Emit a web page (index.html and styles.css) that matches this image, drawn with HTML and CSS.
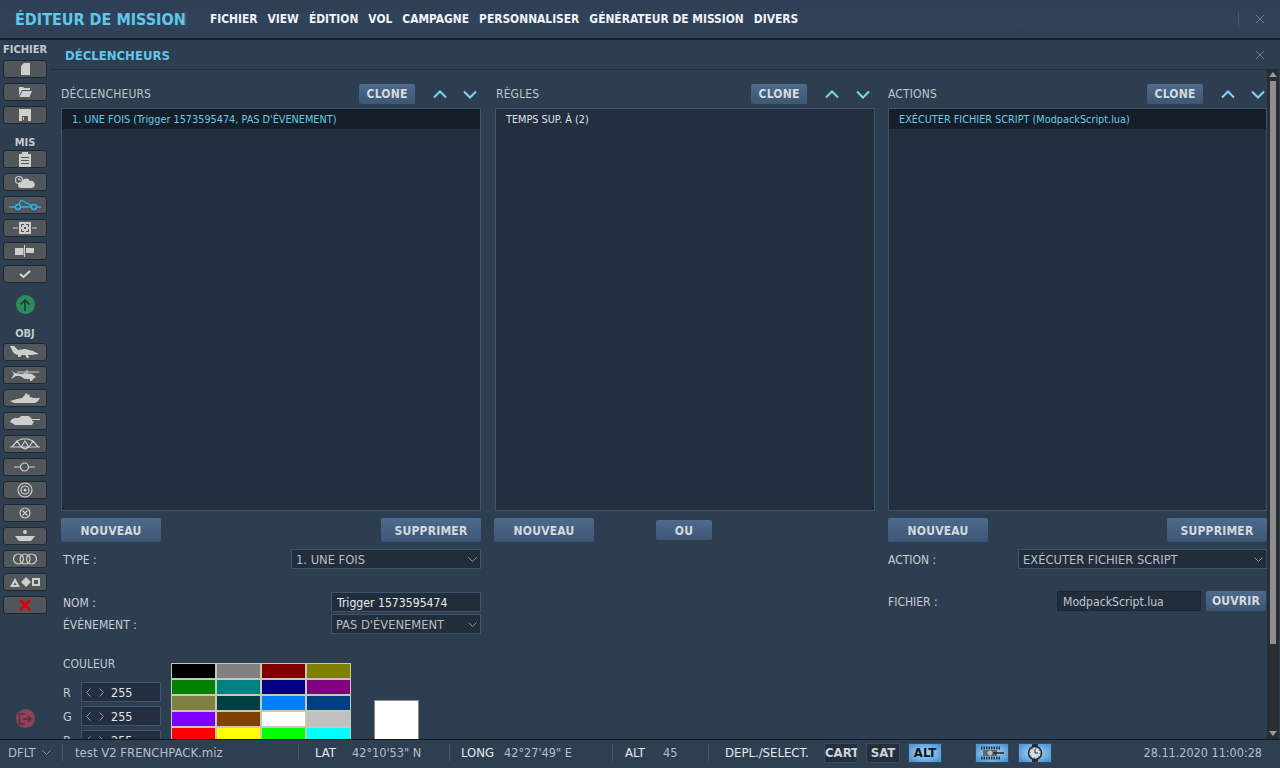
FILE: index.html
```html
<!DOCTYPE html>
<html lang="fr">
<head>
<meta charset="utf-8">
<title>Éditeur de mission</title>
<link rel="stylesheet" href="styles.css">
</head>
<body>
<div class="app">
  <header class="topbar">
    <div class="title">ÉDITEUR DE MISSION</div>
    <nav class="menu">
      <span>FICHIER</span><span>VIEW</span><span>ÉDITION</span><span>VOL</span><span>CAMPAGNE</span><span>PERSONNALISER</span><span>GÉNÉRATEUR DE MISSION</span><span>DIVERS</span>
    </nav>
    <div class="top-close"><svg width="10" height="10" viewBox="0 0 10 10"><path d="M1 1l8 8M9 1l-8 8" class="x"/></svg></div>
  </header>
  <div class="middle">
    <aside class="sidebar">
      <div class="side-label">FICHIER</div>
      <div class="tool"><svg width="14" height="14" viewBox="0 0 14 14"><path class="f" d="M6 1h6v12H3V4z"/></svg></div>
      <div class="tool"><svg width="14" height="12" viewBox="0 0 14 12"><path class="f" d="M1 1h4l1 1h6v2H4L1 10z M4.500 5H14l-2.500 6H1.500z"/></svg></div>
      <div class="tool"><svg width="14" height="14" viewBox="0 0 14 14"><path class="f" fill-rule="evenodd" d="M1 1h12v12H1z M4 8v5h6V8z M5 9h1v3H5z"/></svg></div>
      <div class="side-label mis">MIS</div>
      <div class="tool"><svg width="12" height="15" viewBox="0 0 12 15"><path class="f" fill-rule="evenodd" d="M0 2h3V0h6v2h3v13H0z M2 5v1h8V5z M2 8v1h8V8z M2 11v1h8v-1z"/></svg></div>
      <div class="tool"><svg width="22" height="14" viewBox="0 0 22 14"><circle cx="5" cy="5" r="3.500" class="s"/><path class="s" d="M5 3v2h2"/><path class="f" d="M7 13a3 3 0 0 1 0-6a5 5 0 0 1 9-1a3.500 3.500 0 0 1 2 7z"/></svg></div>
      <div class="tool active"><svg width="32" height="14" viewBox="0 0 32 14"><g class="b"><path d="M0 9h6M12 9h10M28 9h4M12 2l11 6M12 2l-2 5"/><circle cx="9" cy="9" r="2.500"/><circle cx="25" cy="9" r="2.500"/></g></svg></div>
      <div class="tool"><svg width="24" height="14" viewBox="0 0 24 14"><path class="s" d="M0 7h5M19 7h5"/><path class="f" fill-rule="evenodd" d="M6 1h12v12H6z M8 3v3h1V4h2V3z M13 3v1h2v2h1V3z M11 6v2h2V6z M8 8v3h3v-1H9V8z M15 8v2h-2v1h3V8z"/></svg></div>
      <div class="tool"><svg width="20" height="12" viewBox="0 0 20 12"><path class="f" d="M0 3h8.500v7H0zM11 3h8v5h-8zM9 0h1v12H9z"/></svg></div>
      <div class="tool"><svg width="12" height="10" viewBox="0 0 12 10"><path class="chk" d="M1 5l3.500 3L11 2"/></svg></div>
      <div class="round green"><svg width="12" height="14" viewBox="0 0 12 14"><path class="dk" d="M6 13V2M1.500 6.500L6 2l4.500 4.500"/></svg></div>
      <div class="side-label obj">OBJ</div>
      <div class="tool"><svg width="30" height="12" viewBox="0 0 30 12"><path class="f" d="M0 0h4l4 4 7-1 8 2 6 3-8 1-3 0 1 3h-2l-2-3-3 0-2 2H8l0-2-3-1L3 6z"/></svg></div>
      <div class="tool"><svg width="30" height="12" viewBox="0 0 30 12"><path class="s thin" d="M7 3h22M17 1v3"/><path class="f" d="M1 1l4 3 7 1 3-1 7 1 4 3-3 2-1 2h-2l0-2-5 0-5-3-4 0-5 3 3-5z"/></svg></div>
      <div class="tool"><svg width="30" height="10" viewBox="0 0 30 10"><path class="f" d="M0 8l7-2 5-1 2-2 2-3 2 2 1-1 1 3 4 1 6 0-2 3-3 2H4z"/></svg></div>
      <div class="tool"><svg width="30" height="10" viewBox="0 0 30 10"><path class="f" d="M2 3l3-1h4l2-2h8l3 3h8v1h-8l0 1 2 0-2 4H5L2 7 0 6z"/></svg></div>
      <div class="tool"><svg width="30" height="12" viewBox="0 0 30 12"><path class="s" d="M0 9h30M2 9l5-6 4 6 4-6 4 6 4-6 5 6M7 3l5-2h6l5 2M11 9l4 2 4-2"/></svg></div>
      <div class="tool"><svg width="22" height="10" viewBox="0 0 22 10"><path class="s" d="M0 5h6M15 5h6"/><circle class="s" cx="10.500" cy="5" r="4"/></svg></div>
      <div class="tool"><svg width="16" height="16" viewBox="0 0 16 16"><circle class="s" cx="8" cy="8" r="7"/><circle class="s" cx="8" cy="8" r="4"/><circle class="f" cx="8" cy="8" r="1.500"/></svg></div>
      <div class="tool"><svg width="12" height="12" viewBox="0 0 12 12"><circle class="s" cx="6" cy="6" r="5"/><path class="s" d="M3.500 3.500l5 5M8.500 3.500l-5 5"/></svg></div>
      <div class="tool"><svg width="22" height="14" viewBox="0 0 22 14"><path class="f" d="M9 3a2 2 0 1 1 4 0a2 2 0 1 1-4 0zM1 7h20l-4 5H5z"/></svg></div>
      <div class="tool"><svg width="26" height="12" viewBox="0 0 26 12"><g class="s"><circle cx="6.500" cy="6" r="5"/><circle cx="13" cy="6" r="5"/><circle cx="19.500" cy="6" r="5"/></g></svg></div>
      <div class="tool"><svg width="30" height="12" viewBox="0 0 30 12"><path class="f" fill-rule="evenodd" d="M0 11L5 2l5 9z M3.500 9h3L5 6.500z M16 1l5 5-5 5-5-5z M22 2h8v8h-8z M24 4v4h4V4z"/></svg></div>
      <div class="tool"><svg width="14" height="12" viewBox="0 0 14 12"><path class="red" d="M2 1l10 10M12 1L2 11"/></svg></div>
      <div class="round exit"><svg width="14" height="12" viewBox="0 0 14 12"><path class="dk2" d="M7 1H1.500v10H7M5 6h8M10 3l3 3-3 3"/></svg></div>
    </aside>
    <main class="panel">
      <div class="panel-head">
        <h1>DÉCLENCHEURS</h1>
        <svg width="10" height="10" viewBox="0 0 10 10"><path d="M1 1l8 8M9 1l-8 8" class="x"/></svg>
      </div>
      <div class="scroll-area">
        <div class="columns">
          <section class="col col1">
            <div class="col-head"><span class="col-title">DÉCLENCHEURS</span><button class="btn clone">CLONE</button><svg class="ar" width="14" height="9" viewBox="0 0 14 9"><path d="M1 7.500l6-6 6 6"/></svg><svg class="ar" width="14" height="9" viewBox="0 0 14 9"><path d="M1 1.500l6 6 6-6"/></svg></div>
            <div class="list"><div class="row sel">1. UNE FOIS (Trigger 1573595474, PAS D'ÉVENEMENT)</div></div>
            <div class="btn-row"><button class="btn big">NOUVEAU</button><button class="btn big">SUPPRIMER</button></div>
            <div class="form-row type"><span class="lbl">TYPE :</span><div class="select w190"><span>1. UNE FOIS</span><svg width="9" height="5" viewBox="0 0 9 5"><path class="chev" d="M.5.500l4 4 4-4"/></svg></div></div>
            <div class="form-row nom"><span class="lbl">NOM :</span><div class="input w150">Trigger 1573595474</div></div>
            <div class="form-row evt"><span class="lbl">ÉVÈNEMENT :</span><div class="select w150"><span>PAS D'ÉVENEMENT</span><svg width="9" height="5" viewBox="0 0 9 5"><path class="chev" d="M.5.500l4 4 4-4"/></svg></div></div>
            <div class="color">
              <div class="rgb">
                <div class="color-title">COULEUR</div>
                <div class="rgb-row"><span>R</span><div class="spin"><svg width="18" height="9" viewBox="0 0 18 9"><path class="chev" d="M4.500.500L.5 4.500l4 4M13.500.500l4 4-4 4"/></svg><b>255</b></div></div>
                <div class="rgb-row"><span>G</span><div class="spin"><svg width="18" height="9" viewBox="0 0 18 9"><path class="chev" d="M4.500.500L.5 4.500l4 4M13.500.500l4 4-4 4"/></svg><b>255</b></div></div>
                <div class="rgb-row"><span>B</span><div class="spin"><svg width="18" height="9" viewBox="0 0 18 9"><path class="chev" d="M4.500.500L.5 4.500l4 4M13.500.500l4 4-4 4"/></svg><b>255</b></div></div>
              </div>
              <div class="palette">
                <i class="c1"></i><i class="c2"></i><i class="c3"></i><i class="c4"></i>
                <i class="c5"></i><i class="c6"></i><i class="c7"></i><i class="c8"></i>
                <i class="c9"></i><i class="c10"></i><i class="c11"></i><i class="c12"></i>
                <i class="c13"></i><i class="c14"></i><i class="c15"></i><i class="c16"></i>
                <i class="c17"></i><i class="c18"></i><i class="c19"></i><i class="c20"></i>
              </div>
              <div class="swatch"></div>
            </div>
          </section>
          <section class="col col2">
            <div class="col-head"><span class="col-title">RÈGLES</span><button class="btn clone">CLONE</button><svg class="ar" width="14" height="9" viewBox="0 0 14 9"><path d="M1 7.500l6-6 6 6"/></svg><svg class="ar" width="14" height="9" viewBox="0 0 14 9"><path d="M1 1.500l6 6 6-6"/></svg></div>
            <div class="list"><div class="row plain">TEMPS SUP. À (2)</div></div>
            <div class="btn-row left"><button class="btn big">NOUVEAU</button><button class="btn ou">OU</button></div>
          </section>
          <section class="col col3">
            <div class="col-head"><span class="col-title">ACTIONS</span><button class="btn clone">CLONE</button><svg class="ar" width="14" height="9" viewBox="0 0 14 9"><path d="M1 7.500l6-6 6 6"/></svg><svg class="ar" width="14" height="9" viewBox="0 0 14 9"><path d="M1 1.500l6 6 6-6"/></svg></div>
            <div class="list"><div class="row sel">EXÉCUTER FICHIER SCRIPT (ModpackScript.lua)</div></div>
            <div class="btn-row"><button class="btn big">NOUVEAU</button><button class="btn big">SUPPRIMER</button></div>
            <div class="form-row type act"><span class="lbl">ACTION :</span><div class="select w249"><span>EXÉCUTER FICHIER SCRIPT</span><svg width="9" height="5" viewBox="0 0 9 5"><path class="chev" d="M.5.500l4 4 4-4"/></svg></div></div>
            <div class="form-row nom file"><span class="lbl">FICHIER :</span><div class="file-ctl"><div class="input w144 dim">ModpackScript.lua</div><button class="btn open">OUVRIR</button></div></div>
          </section>
        </div>
        <div class="scrollbar">
          <svg width="8" height="5" viewBox="0 0 8 5"><path d="M4 0l4 5H0z" class="sb-a"/></svg>
          <div class="thumb"></div>
          <svg class="down" width="8" height="5" viewBox="0 0 8 5"><path d="M4 5l4-5H0z" class="sb-a"/></svg>
        </div>
      </div>
    </main>
  </div>
  <footer class="status">
    <div class="cell dflt">DFLT <svg width="9" height="5" viewBox="0 0 9 5"><path class="chev" d="M.5.500l4 4 4-4"/></svg></div>
    <div class="cell file-name">test V2 FRENCHPACK.miz</div>
    <div class="cell lat"><span class="k">LAT</span><span class="v">42°10'53" N</span></div>
    <div class="cell long"><span class="k">LONG</span><span class="v">42°27'49" E</span></div>
    <div class="cell alt"><span class="k">ALT</span><span class="v">45</span></div>
    <div class="cell depl"><span class="k">DEPL./SELECT.</span></div>
    <div class="tbtn carte"><span>CARTE</span></div>
    <div class="tbtn sat">SAT</div>
    <div class="tbtn on alt-b">ALT</div>
    <div class="tbtn on ic first"><svg width="24" height="14" viewBox="0 0 24 14"><path class="ic-t" d="M1 2h19M1 12h19"/><path class="ic-g" d="M3 4h14v6H3z"/><circle cx="10" cy="7" r="2.500" class="ic-l"/><path class="ic-k" d="M13 7h11"/></svg></div>
    <div class="tbtn on ic"><svg width="18" height="18" viewBox="0 0 18 18"><path class="ic-d" d="M6 0h6v3H6zM6 15h6v3H6z"/><circle cx="9" cy="9" r="6.500" class="ic-w"/><circle cx="9" cy="9" r="5" class="ic-dots"/><path class="ic-k2" d="M9 5v4h3"/></svg></div>
    <div class="date">28.11.2020 11:00:28</div>
  </footer>
</div>
</body>
</html>
```
FILE: styles.css
```css
*{box-sizing:border-box}
html,body{margin:0;padding:0;width:1280px;height:768px;overflow:hidden}
body{font-family:"DejaVu Sans Condensed","DejaVu Sans",sans-serif;background:#2d3e51;color:#c9ced3}
.app{width:1280px;height:768px;display:flex;flex-direction:column;overflow:hidden}
.topbar{height:40px;flex:none;display:flex;align-items:center;background:linear-gradient(#2e3f53,#30435a 60%,#2e3f52);border-bottom:2px solid #161e29}
.title{width:186px;height:17px;line-height:17px;padding-left:15px;font-size:16px;font-weight:bold;color:#5fc8ea;white-space:nowrap;border-right:1px solid #44576b}
.menu{display:flex;gap:10px;margin-left:24px;font-size:11.880px;font-weight:bold;color:#f1f3f5}
.top-close{margin-left:auto;width:42px;height:16px;border-left:1px solid #44576b;display:flex;align-items:center;justify-content:center;padding-left:1px}
.x{stroke:#6c8097;stroke-width:1;fill:none}
.middle{flex:1;min-height:0;display:flex}
.sidebar{width:50px;flex:none;display:flex;flex-direction:column;align-items:center;padding-top:4px;gap:5px}
.side-label{font-size:11px;font-weight:bold;color:#c3c9cf;height:11px;line-height:11px}
.side-label.mis{margin-top:8px;margin-bottom:-3px}
.side-label.obj{margin-top:9px;margin-bottom:-1px}
.tool{width:44px;height:18px;flex:none;background:#50565a;border:1px solid #20272f;border-radius:3px;display:flex;align-items:center;justify-content:center}
.f{fill:#cdcfcb}
.s{stroke:#cdcfcb;stroke-width:1.200;fill:none}
.thin{stroke-width:1}
.b{stroke:#2cb4e4;stroke-width:1.400;fill:none}
.chk{stroke:#d8dad6;stroke-width:2;fill:none}
.red{stroke:#e00008;stroke-width:3;fill:none}
.dk{stroke:#17392e;stroke-width:1.500;fill:none}
.dk2{stroke:#5a2b3a;stroke-width:1.500;fill:none}
.round{width:19px;height:19px;border-radius:50%;display:flex;align-items:center;justify-content:center;flex:none}
.green{background:#2e8c5c;margin-top:7px}
.exit{background:#8a4655;margin-top:auto;margin-bottom:11px}
.panel{flex:1;min-width:0;display:flex;flex-direction:column}
.panel-head{height:30px;flex:none;border-bottom:1px solid #1f2c3a;display:flex;align-items:center;justify-content:space-between;padding:1px 15px 0}
.panel-head h1{margin:0;font-size:13px;font-weight:bold;color:#5fc8ea}
.scroll-area{flex:1;min-height:0;display:flex;overflow:hidden}
.columns{width:1217px;flex:none;display:flex;padding-left:11px;overflow:hidden}
.col{flex:none;display:flex;flex-direction:column}
.col1{width:420px;margin-right:14px}
.col2{width:380px;margin-right:13px}
.col3{width:379px}
.col-head{height:24px;margin-top:12px;flex:none;display:flex;align-items:center;padding-right:4px}
.col-title{font-size:12px;color:#bfc5cb;margin-right:auto;letter-spacing:.15px}
.col2 .col-title{padding-left:1px}
.col-head .ar{margin-left:16px;flex:none}
.col-head .clone+.ar{margin-left:18px}
.col2 .col-head{padding-right:5px}
.col2 .col-head .ar:last-child{margin-left:17px}
.col3 .col-head{padding-right:2px}
.ar path{stroke:#7fd6f0;stroke-width:2;fill:none}
.btn{font-family:inherit;border:0;font-weight:bold;color:#d5d9dc;background:linear-gradient(#4d6b8e,#3d5674);border-radius:2px;padding:0;letter-spacing:.2px}
.clone{width:56px;height:20px;font-size:12px}
.list{height:403px;margin-top:2px;flex:none;background:#232f3e;border:1px solid #3d546e}
.row{height:20px;line-height:21px;font-size:10.800px;padding-left:10px;white-space:nowrap}
.row.sel{background:#161e2a;color:#69cbe6}
.row.plain{color:#dfe3e6}
.btn-row{display:flex;justify-content:space-between;margin-top:7px;flex:none}
.btn-row.left{justify-content:flex-start;margin-left:-1px}
.big{width:100px;height:24px;font-size:12px;padding-top:1px}
.ou{width:56px;height:20px;font-size:12px;margin:2px 0 0 62px;padding-top:1px}
.form-row{display:flex;align-items:center;justify-content:space-between;height:20px;flex:none}
.lbl{font-size:12px;color:#c9ced3;padding-left:2px;padding-top:1px}
.act .lbl,.file .lbl{padding-left:0}
.type{margin-top:7px}
.nom{margin-top:23px}
.evt{margin-top:2px}
.file{margin-top:22px}
.select,.input{height:20px;background:#222d3b;border:1px solid #3d546e;display:flex;align-items:center;white-space:nowrap}
.select{font-size:12.800px;justify-content:space-between;padding:1px 3px 0 4px;color:#b8bec4}
.input{font-size:12.150px;padding:1px 0 0 5px;color:#e8ebed}
.input.dim{color:#c0c6cc;border-color:#1c2633}
.w190{width:190px}
.w150{width:150px}
.w249{width:249px}
.w144{width:144px}
.chev{stroke:#8b99a8;stroke-width:1;fill:none}
.file-ctl{display:flex;gap:5px;align-items:center;padding-right:1px}
.open{width:60px;height:20px;font-size:12px}
.color{display:flex;margin-top:29px;align-items:flex-start;flex:none}
.rgb{width:110px;padding-left:2px}
.color-title{font-size:12px;height:12px;line-height:12px;margin-top:-5px;margin-bottom:12px;color:#c3c9cf}
.rgb-row{display:flex;align-items:center;height:20px;margin-bottom:4px;font-size:12.500px}
.rgb-row span{width:18px;color:#c3c9cf}
.spin{width:80px;height:20px;background:#232f3e;border:1px solid #3d546e;display:flex;align-items:center;padding-left:4px}
.spin b{font-weight:normal;font-size:12.500px;color:#e2e5e8;margin-left:7px}
.palette{width:180px;display:grid;grid-template-columns:repeat(4,45px);grid-auto-rows:16px}
.palette i{display:block;border:1px solid #c5c9b8}
.c1{background:#000}.c2{background:#808080}.c3{background:#800000}.c4{background:#808000}
.c5{background:#008000}.c6{background:#008080}.c7{background:#000080}.c8{background:#800080}
.c9{background:#808040}.c10{background:#004040}.c11{background:#0080ff}.c12{background:#004080}
.c13{background:#8000ff}.c14{background:#804000}.c15{background:#fff}.c16{background:#c0c0c0}
.c17{background:#f00}.c18{background:#ff0}.c19{background:#0f0}.c20{background:#0ff}
.swatch{width:45px;height:45px;margin:37px 0 0 23px;background:#fff;border:1px solid #8a8a8a}
.scrollbar{width:12px;flex:none;background:#2a2d31;display:flex;flex-direction:column;align-items:center;padding-top:2px}
.sb-a{fill:#9a9a9a}
.thumb{width:6px;height:563px;background:#8e8e8e;margin-top:4px}
.down{margin-top:auto;margin-bottom:3px}
.status{height:29px;flex:none;border-top:1px solid #11181f;display:flex;align-items:center;padding-bottom:3px;background:#2e3f52;font-size:12.600px;color:#b7bec6}
.cell{display:flex;align-items:center;white-space:nowrap;height:17px;border-right:1px solid #44576b}
.dflt{width:63px;padding-left:8px;gap:6px;font-size:13px}
.file-name{width:236px;padding-left:12px;font-size:13px}
.lat{width:151px;padding-left:16px}
.long{width:163px;padding-left:11px}
.alt{width:96px;padding-left:12px}
.depl{border:0;padding-left:16px;width:115px}
.k{color:#e6e9ec;font-size:13px}
.lat .k{width:37px}
.long .k{width:43px}
.alt .k{width:38px}
.tbtn{width:34px;height:20px;flex:none;margin-right:8px;border:1px solid #35495f;background:#232f3d;font-size:13px;font-weight:bold;color:#cfd3d7;display:flex;align-items:center;justify-content:center;overflow:hidden}
.tbtn.carte{justify-content:flex-start}
.tbtn span{white-space:nowrap}
.tbtn.on{background:radial-gradient(ellipse at center,#b8def5,#4d96d6 85%);color:#0d1620}
.ic{margin-right:9px}
.first{margin-left:25px}
.ic-d{fill:#2a2f33}
.ic-t{stroke:#2a2f33;stroke-width:3;stroke-dasharray:1.500 1;fill:none}
.ic-g{fill:#5b6770}
.ic-l{fill:#b4b9bd}
.ic-k{stroke:#20262b;stroke-width:1.500}
.ic-w{fill:#cfe0ea;stroke:#20262b;stroke-width:1.500}
.ic-dots{fill:none;stroke:#20262b;stroke-width:1;stroke-dasharray:1 2.900}
.ic-k2{stroke:#20262b;fill:none}
.date{margin-left:auto;padding-right:18px;font-size:12.500px;color:#b7bec6}
```
